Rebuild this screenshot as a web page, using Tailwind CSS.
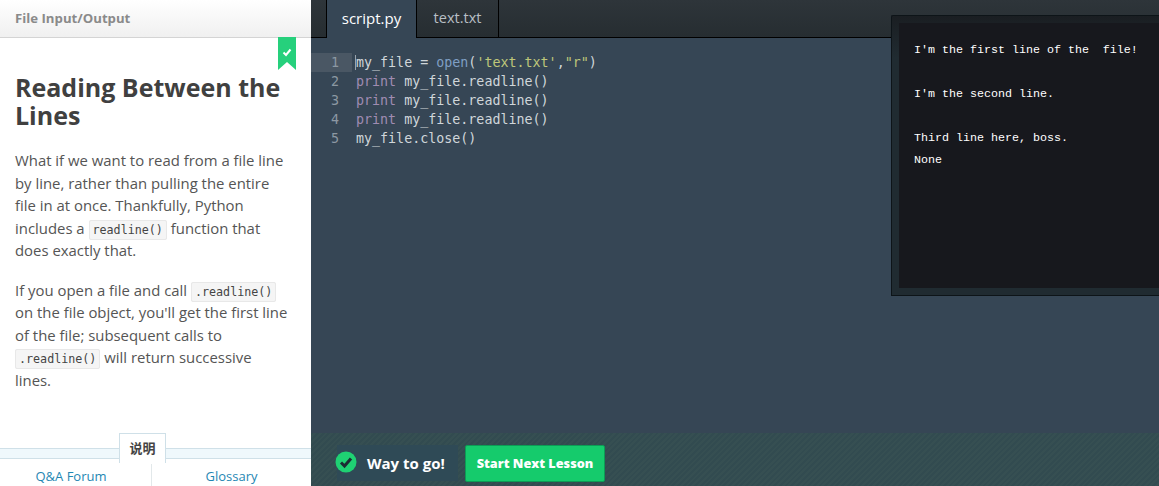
<!DOCTYPE html>
<html><head><meta charset="utf-8"><title>Reading Between the Lines</title>
<script src="https://cdn.jsdelivr.net/npm/@tailwindcss/browser@4"></script></head>
<body class="overflow-hidden">
<div class="flex h-[486px] w-[1159px] overflow-hidden font-['Open_Sans','Noto_Sans_CJK_SC',sans-serif]">
  <aside class="relative flex w-[311px] shrink-0 flex-col bg-white">
    <header class="flex h-[38px] items-center border-b border-[#d4d4d4] bg-gradient-to-b from-white to-[#f0f0f0] px-[15px] text-[13.2px] font-bold text-[#8a8a8a]">File Input/Output</header>
    <svg class="absolute left-[278px] top-[37px]" width="18" height="33" viewBox="0 0 18 33"><path d="M0 0H18V33L9 25L0 33Z" fill="#26d07c"/><path d="M5.5 15.5L8 18L12.5 12.5" fill="none" stroke="#fff" stroke-width="2"/></svg>
    <main class="flex-1 pl-[15px] pr-[20px] pt-[35px] text-[14.9px] leading-[22.5px] text-[#555]">
      <h1 class="mb-[20px] text-[25px] leading-[28px] font-bold text-[#404040]">Reading Between the Lines</h1>
      <p class="mb-[17px]">What if we want to read from a file line by line, rather than pulling the entire file in at once. Thankfully, Python includes a <code class="rounded-[2px] border border-[#e8e8e8] bg-[#f5f5f5] px-[3px] py-[2px] font-['DejaVu_Sans_Mono',monospace] text-[11.7px] leading-none text-[#444]">readline()</code> function that does exactly that.</p>
      <p>If you open a file and call <code class="rounded-[2px] border border-[#e8e8e8] bg-[#f5f5f5] px-[3px] py-[2px] font-['DejaVu_Sans_Mono',monospace] text-[11.7px] leading-none text-[#444]">.readline()</code> on the file object, you'll get the first line of the file; subsequent calls to <code class="rounded-[2px] border border-[#e8e8e8] bg-[#f5f5f5] px-[3px] py-[2px] font-['DejaVu_Sans_Mono',monospace] text-[11.7px] leading-none text-[#444]">.readline()</code> will return successive lines.</p>
    </main>
    <div class="relative h-[11px] border-y border-[#cfe0e8] bg-[#eff8fc]">
      <div class="absolute left-[119px] top-[-16px] flex h-[30px] w-[47px] items-center justify-center border border-b-0 border-[#cfe0e8] bg-white text-[13px] font-bold text-[#444]">说明</div>
    </div>
    <nav class="flex h-[27px] text-[13px] text-[#1f87b3]">
      <a class="mt-[5px] flex w-[152px] items-center justify-center border-r border-[#e2e8ea] pt-[3px] pr-[9px]">Q&amp;A Forum</a>
      <a class="mt-[5px] flex flex-1 items-center justify-center pt-[3px]">Glossary</a>
    </nav>
  </aside>
  <section class="relative flex min-w-0 flex-1 flex-col bg-[#364655]">
    <div class="flex h-[38px] bg-gradient-to-b from-[#2e353a] to-[#262d31]">
      <div class="w-[15px] border-b border-black"></div>
      <div class="flex w-[90px] items-center justify-center border-l border-black bg-[#364655] pb-[2px] text-[15px] text-white">script.py</div>
      <div class="flex w-[83px] items-center justify-center border-x border-b border-black pb-[2px] text-[14.5px] text-[#b8bfc4]">text.txt</div>
      <div class="flex-1 border-b border-black"></div>
    </div>
    <div class="flex flex-1 pt-[15px] font-['DejaVu_Sans_Mono',monospace] text-[13.33px] leading-[19px] text-[#d0d6da]">
      <div class="w-[41px] text-right text-[#8c98a3]">
        <div class="h-[19px] bg-[#4a5764] pr-[13px]">1</div>
        <div class="pr-[13px]">2</div><div class="pr-[13px]">3</div><div class="pr-[13px]">4</div><div class="pr-[13px]">5</div>
      </div>
      <pre class="ml-[4px] font-['DejaVu_Sans_Mono',monospace]"><span class="shadow-[-1px_0_0_#9aa5ae]">my_file = <span class="text-[#7f9fc4]">open</span>(<span class="text-[#bfc77a]">'text.txt'</span>,<span class="text-[#bfc77a]">"r"</span>)</span>
<span class="text-[#a08cb2]">print</span> my_file.readline()
<span class="text-[#a08cb2]">print</span> my_file.readline()
<span class="text-[#a08cb2]">print</span> my_file.readline()
my_file.close()</pre>
    </div>
    <div class="flex h-[53px] gap-[7px] bg-[repeating-linear-gradient(135deg,#324b50_0,#324b50_2px,#364f52_2px,#364f52_4px)] pl-[26px] pt-[12px]">
      <div class="flex h-[36px] w-[121px] items-center bg-[#2f4a56] text-[15px] font-bold text-white">
        <svg class="mb-[2px] ml-[-2px] mr-[10px] shrink-0" width="22" height="22" viewBox="0 0 22 22"><circle cx="11" cy="11" r="10.5" fill="#1fd173"/><path d="M6 11.5L9.5 15L16 7.5" fill="none" stroke="#1c2b33" stroke-width="3"/></svg>
        Way to go!
      </div>
      <button class="h-[37px] w-[140px] rounded-[2px] border border-[#0c9c55] bg-[#15cb6c] text-[12.7px] font-extrabold text-white">Start Next Lesson</button>
    </div>
    <div class="absolute left-[580px] right-0 top-[15px] h-[281px] rounded-tl-[2px] border border-r-0 border-[#0d1418] bg-gradient-to-b from-[#1a1e22] to-[#202b31] to-[15%] py-[7px] pl-[7px]">
      <pre class="h-full bg-[#17181d] px-[15px] pt-[16px] font-['Liberation_Mono',monospace] text-[11.67px] leading-[22px] text-white">I'm the first line of the  file!

I'm the second line.

Third line here, boss.
None</pre>
    </div>
  </section>
</div>
</body></html>
